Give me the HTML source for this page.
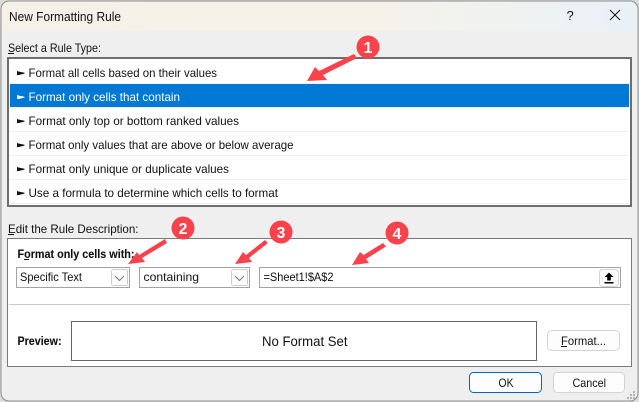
<!DOCTYPE html>
<html><head><meta charset="utf-8"><title>New Formatting Rule</title>
<style>
html,body{margin:0;padding:0;width:639px;height:402px;overflow:hidden;background:#d9d9d9}
svg{display:block;font-family:"Liberation Sans",sans-serif}
text{fill:#111;font-size:12px}
.b{font-weight:bold;stroke:#111;stroke-width:.1px}
</style></head><body>
<svg width="639" height="402" viewBox="0 0 639 402" xmlns="http://www.w3.org/2000/svg">
<defs>
<linearGradient id="tb" x1="0" x2="1" y1="0" y2="0">
<stop offset="0" stop-color="#f5f1e8"/><stop offset=".55" stop-color="#f6f2e9"/><stop offset=".78" stop-color="#f0f2f0"/><stop offset="1" stop-color="#e9f1f7"/>
</linearGradient>
<clipPath id="dlg"><rect x="1" y="1" width="637" height="400" rx="8"/></clipPath>
</defs>
<rect width="639" height="402" fill="#dcdcdc"/>
<rect x="1" y="1" width="637" height="400" rx="8" fill="#efefef"/>
<g clip-path="url(#dlg)"><rect x="1" y="1" width="637" height="30" fill="url(#tb)"/></g>
<rect x="1" y="1" width="637" height="400" rx="8" fill="none" stroke="#8e8e8e"/>
<text x="9" y="21" textLength="112" lengthAdjust="spacingAndGlyphs" style="font-size:12.5px">New Formatting Rule</text>
<text x="566.500" y="20" style="font-size:13px" fill="#222">?</text>
<path d="M610 10l10 10M620 10l-10 10" stroke="#111" stroke-width="1" fill="none"/>

<text x="8" y="52" textLength="93" lengthAdjust="spacingAndGlyphs">Select a Rule Type:</text>
<rect x="8" y="53" width="6" height="1" fill="#111"/>

<rect x="8" y="58" width="623" height="148" fill="#fff" stroke="#6e6e6e" stroke-width="2"/>
<g fill="#e9f1f5">
<rect x="10" y="83" width="619" height="1"/><rect x="10" y="107" width="619" height="1"/><rect x="10" y="131" width="619" height="1"/><rect x="10" y="155" width="619" height="1"/><rect x="10" y="179" width="619" height="1"/><rect x="10" y="203" width="619" height="1"/>
</g>
<rect x="10" y="84" width="619" height="23" fill="#0078d4"/>
<g fill="#111">
<path d="M17 70.500v4.500h1.500l6-1.400v-.9l-6-1.200h-.5z"/>
<path d="M17 118.500v4.500h1.500l6-1.400v-.9l-6-1.200h-.5z"/>
<path d="M17 142.500v4.500h1.500l6-1.400v-.9l-6-1.200h-.5z"/>
<path d="M17 166.500v4.500h1.500l6-1.400v-.9l-6-1.200h-.5z"/>
<path d="M17 190.500v4.500h1.500l6-1.400v-.9l-6-1.200h-.5z"/>
</g>
<path d="M17 94.500v4.500h1.500l6-1.400v-.9l-6-1.200h-.5z" fill="#fff"/>
<text x="28.500" y="77" textLength="188.500" lengthAdjust="spacingAndGlyphs">Format all cells based on their values</text>
<text x="28.500" y="101" textLength="151.500" lengthAdjust="spacingAndGlyphs" style="fill:#fff">Format only cells that contain</text>
<text x="28.500" y="125" textLength="210.500" lengthAdjust="spacingAndGlyphs">Format only top or bottom ranked values</text>
<text x="28.500" y="149" textLength="265" lengthAdjust="spacingAndGlyphs">Format only values that are above or below average</text>
<text x="28.500" y="173" textLength="200.500" lengthAdjust="spacingAndGlyphs">Format only unique or duplicate values</text>
<text x="28.500" y="197" textLength="249.500" lengthAdjust="spacingAndGlyphs">Use a formula to determine which cells to format</text>

<text x="8" y="233" textLength="130.500" lengthAdjust="spacingAndGlyphs">Edit the Rule Description:</text>
<rect x="8" y="234" width="6" height="1" fill="#111"/>

<rect x="7.500" y="238.500" width="624" height="128" fill="#fff" stroke="#7a7a7a"/>
<text class="b" x="17.500" y="258" textLength="117" lengthAdjust="spacingAndGlyphs">Format only cells with:</text>
<rect x="24" y="259" width="5" height="1" fill="#111"/>

<rect x="16.500" y="267.500" width="113" height="20" fill="#fff" stroke="#a3a3a3"/>
<rect x="111.500" y="269.500" width="16" height="16" rx="2" fill="#fdfdfd" stroke="#cdcdcd"/>
<path d="M115 276l4.500 4.500 4.500-4.500" fill="none" stroke="#777"/>
<text x="20" y="281" textLength="62" lengthAdjust="spacingAndGlyphs">Specific Text</text>

<rect x="139.500" y="267.500" width="110" height="20" fill="#fff" stroke="#a3a3a3"/>
<rect x="231.500" y="269.500" width="16" height="16" rx="2" fill="#fdfdfd" stroke="#cdcdcd"/>
<path d="M235 276l4.500 4.500 4.500-4.500" fill="none" stroke="#777"/>
<text x="143.500" y="281" textLength="55.500" lengthAdjust="spacingAndGlyphs">containing</text>

<rect x="259.500" y="267.500" width="361" height="20" fill="#fff" stroke="#a3a3a3"/>
<text x="263.500" y="281" textLength="70" lengthAdjust="spacingAndGlyphs">=Sheet1!$A$2</text>
<rect x="599.500" y="269.500" width="19" height="17" rx="3" fill="#fdfdfd" stroke="#d4d4d4"/>
<path d="M609 272.500l4.500 4.500h-2.700v3.500h-3.600v-3.500h-2.700zM604.500 282h9v1.500h-9z" fill="#000"/>

<rect x="9" y="304" width="621" height="1" fill="#c9c9c9"/>
<text class="b" x="17.500" y="345" textLength="44" lengthAdjust="spacingAndGlyphs">Preview:</text>
<rect x="71.500" y="321.500" width="465" height="39" fill="#fff" stroke="#666"/>
<text x="262" y="346" textLength="85.500" lengthAdjust="spacingAndGlyphs" style="font-size:14px">No Format Set</text>

<rect x="547.500" y="330.500" width="72" height="20" rx="4" fill="#fdfdfd" stroke="#d4d4d4"/>
<text x="561" y="345" textLength="45" lengthAdjust="spacingAndGlyphs">Format...</text>
<rect x="561" y="346" width="6" height="1" fill="#111"/>

<rect x="469.500" y="372.500" width="72" height="20" rx="4" fill="#fdfdfd" stroke="#0067c0"/>
<text x="498.500" y="387" textLength="15" lengthAdjust="spacingAndGlyphs">OK</text>
<rect x="553.500" y="372.500" width="71" height="20" rx="4" fill="#fdfdfd" stroke="#d4d4d4"/>
<text x="572.500" y="387" textLength="33.500" lengthAdjust="spacingAndGlyphs">Cancel</text>
<g fill="#b5b5b5">
<rect x="633" y="391" width="2" height="2"/><rect x="630" y="394" width="2" height="2"/><rect x="633" y="394" width="2" height="2"/><rect x="627" y="397" width="2" height="2"/><rect x="630" y="397" width="2" height="2"/><rect x="633" y="397" width="2" height="2"/>
</g>

<g fill="#f9424b" stroke="none">
<path d="M307 81L315 67L319 71L354 54L357 58L323 75L327 80z"/>
<circle cx="368" cy="47" r="11.500"/>
<path d="M128 264L137 252L139 255L165 239L167 243L142 258L145 262z"/>
<circle cx="183" cy="228" r="11.500"/>
<path d="M235 264L243 252L246 255L265 240L268 243L249 258L252 262z"/>
<circle cx="281" cy="232" r="11.500"/>
<path d="M352 265L360 252L363.500 255L383 243L386 246.500L366 259L369 263z"/>
<circle cx="397" cy="233" r="11.500"/>
</g>
<g text-anchor="middle" style="font-weight:bold">
<text x="368" y="53" style="fill:#fff;font-size:16px">1</text>
<text x="183" y="234" style="fill:#fff;font-size:16px">2</text>
<text x="281" y="238" style="fill:#fff;font-size:16px">3</text>
<text x="397" y="239" style="fill:#fff;font-size:16px">4</text>
</g>
</svg>
</body></html>
